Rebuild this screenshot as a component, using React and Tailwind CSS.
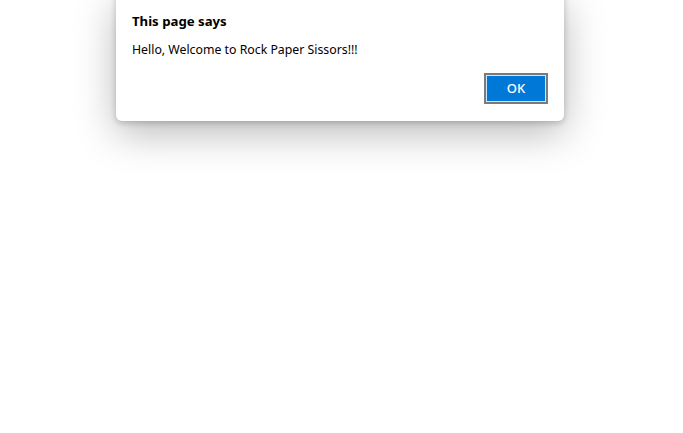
export default function App() {
  return (
    <div className="w-[683px] h-[433px] bg-white overflow-hidden font-['Noto_Sans',sans-serif]">
      <div className="ml-[116px] w-[448px] -mt-[8px] bg-white rounded-b-[6px] shadow-[0_12px_40px_rgba(0,0,0,0.28),0_2px_6px_rgba(0,0,0,0.2)] px-4 pt-[19px] pb-[17px]">
        <h1 className="text-[13.2px] leading-[20px] font-bold text-black">This page says</h1>
        <p className="mt-[9px] text-[12.3px] leading-[20px] text-black">Hello, Welcome to Rock Paper Sissors!!!</p>
        <div className="flex justify-end mt-[13px]">
          <button className="w-[64px] h-[31px] border-2 border-[#7a7a7a] p-[1px] bg-[#cfe6fb]">
            <span className="flex w-full h-full items-center justify-center bg-[#0078d7] text-white text-[13px] font-medium">OK</span>
          </button>
        </div>
      </div>
    </div>
  );
}
